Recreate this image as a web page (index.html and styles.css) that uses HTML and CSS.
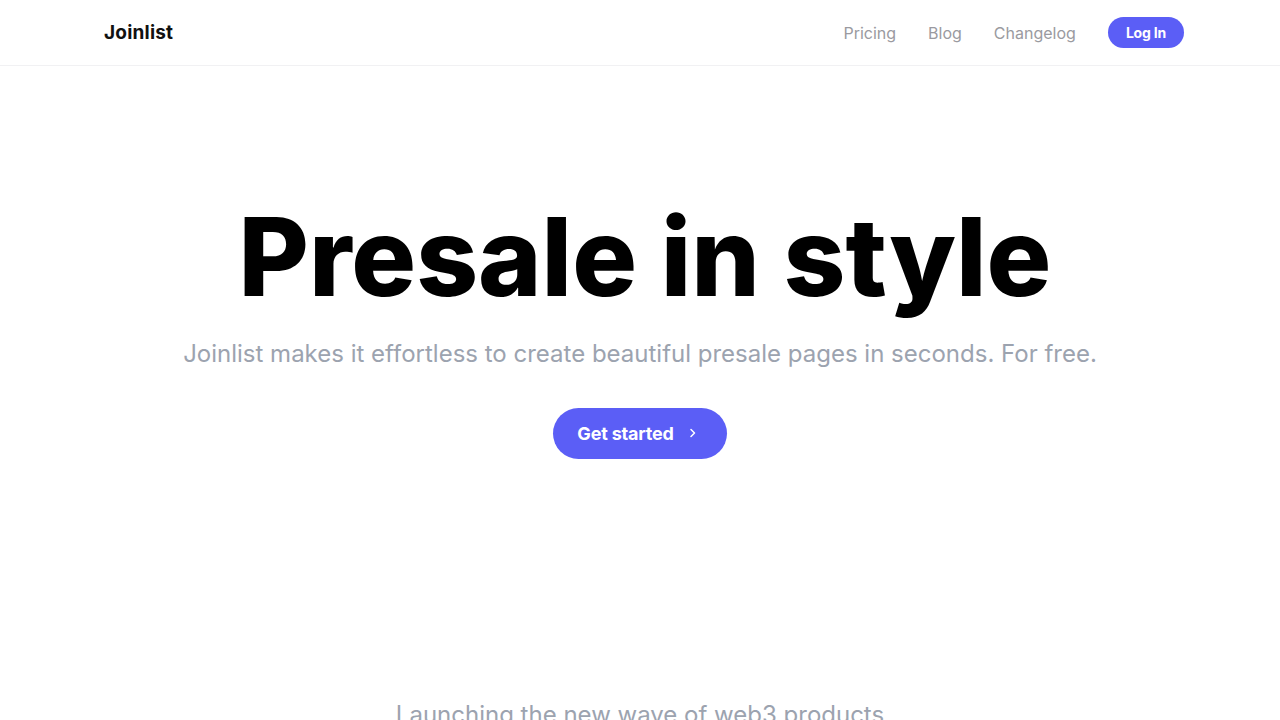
FILE: index.html
```html
<!DOCTYPE html>
<html lang="en">
<head>
<meta charset="utf-8">
<title>Joinlist</title>
<link rel="stylesheet" href="styles.css">
</head>
<body>
<header class="nav">
  <div class="nav-inner">
    <a class="logo" href="#">Joinlist</a>
    <nav class="links">
      <a href="#">Pricing</a>
      <a href="#">Blog</a>
      <a href="#">Changelog</a>
      <a class="login" href="#">Log In</a>
    </nav>
  </div>
</header>
<main>
  <section class="hero">
    <h1>Presale in style</h1>
    <p class="sub">Joinlist makes it effortless to create beautiful presale pages in seconds. For free.</p>
    <a class="cta" href="#">Get started
      <svg width="10" height="12" viewBox="0 0 10 12" fill="none"><path d="M3 2.5 6.5 6 3 9.5" stroke="#fff" stroke-width="1.5" stroke-linecap="round" stroke-linejoin="round"/></svg>
    </a>
  </section>
  <section class="launch">
    <p>Launching the new wave of web3 products</p>
  </section>
</main>
</body>
</html>
```
FILE: styles.css
```css
* { box-sizing: border-box; }
html, body { margin: 0; padding: 0; background: #fff; }
body { font-family: Inter, "Noto Sans", sans-serif; color: #000; overflow: hidden; }
a { text-decoration: none; }
.nav { border-bottom: 1px solid #f1f1f3; height: 66px; }
.nav-inner { height: 65px; display: flex; align-items: center; justify-content: space-between; padding: 0 96px 0 104px; }
.logo { font-weight: 700; font-size: 19px; color: #111; letter-spacing: 0.2px; }
.links { display: flex; align-items: center; gap: 32px; }
.links a { color: #9a9aa0; font-size: 16px; }
.links a.login { background: #5b5ef6; color: #fff; font-weight: 700; font-size: 14px; height: 31px; padding: 0 18px; border-radius: 16px; display: flex; align-items: center; letter-spacing: -0.2px; }
.hero { display: flex; flex-direction: column; align-items: center; padding-top: 126px; }
h1 { margin: 0 0 0 10px; font-size: 108px; font-weight: 800; letter-spacing: 0; line-height: 1.2; }
.sub { margin: 16px 0 0; font-size: 24px; color: #9ca3af; line-height: 1.3; }
.cta { margin-top: 39px; display: flex; align-items: center; gap: 14px; height: 51px; padding: 0 29px 0 24px; border-radius: 26px; background: #5b5ef6; color: #fff; font-weight: 700; font-size: 18px; letter-spacing: -0.2px; }
.launch { display: flex; justify-content: center; padding-top: 241px; }
.launch p { margin: 0; font-size: 24px; color: #9ca3af; }
```
